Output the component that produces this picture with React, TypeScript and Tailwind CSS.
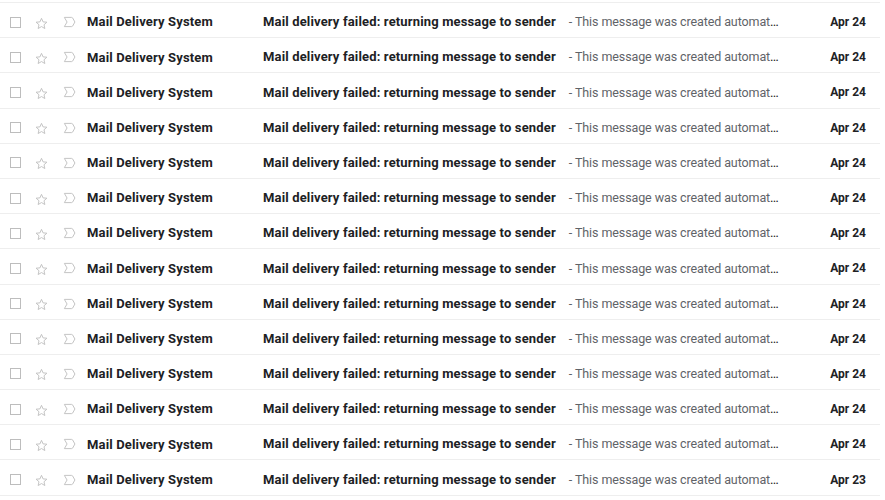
import React from "react";

interface IMailRow {
  sender: string;
  subject: string;
  snippet: string;
  date: string;
}

const rows: IMailRow[] = Array.from({ length: 14 }, (_, i) => ({
  sender: "Mail Delivery System",
  subject: "Mail delivery failed: returning message to sender",
  snippet: "This message was created automatically by mail delivery software.",
  date: i === 13 ? "Apr 23" : "Apr 24",
}));

const StarIcon = () => (
  <svg width="13" height="13" viewBox="0 0 24 24" fill="none" stroke="#c2c2c2" strokeWidth="1.8" strokeLinejoin="round">
    <polygon points="12,2.5 14.9,9 22,9.6 16.6,14.3 18.2,21.3 12,17.6 5.8,21.3 7.4,14.3 2,9.6 9.1,9" />
  </svg>
);

const ImportantIcon = () => (
  <svg width="13" height="12" viewBox="0 0 24 22" fill="none" stroke="#c2c2c2" strokeWidth="1.8" strokeLinejoin="round">
    <path d="M2.5 2.5h13.5c.7 0 1.3.3 1.7.9L22 11l-4.3 7.6c-.4.6-1 .9-1.7.9H2.5L7.5 11z" />
  </svg>
);

const MailRow: React.FunctionComponent<{ row: IMailRow }> = ({ row }) => (
  <div className="flex h-[35.2px] items-center border-b border-[#eeeeee] pt-[4px] text-[13px] text-[#202124]">
    <div className="flex w-[31px] pl-[10px]">
      <div className="h-[11px] w-[11px] border border-[#bdbdbd]" />
    </div>
    <div className="flex w-[21px] justify-center pt-[2px]">
      <StarIcon />
    </div>
    <div className="flex w-[35px] pl-[11px]">
      <ImportantIcon />
    </div>
    <div className="w-[176px] truncate font-bold tracking-[0.15px]">{row.sender}</div>
    <div className="min-w-0 flex-1 truncate">
      <span className="font-bold tracking-[0.15px]">{row.subject}</span>
      <span className="ml-[13px] text-[12.5px] tracking-[-0.1px] text-[#5f6368]">- {row.snippet}</span>
    </div>
    <div className="w-[100px] shrink-0 pr-[14px] text-right text-[12px] font-bold">{row.date}</div>
  </div>
);

export default function App() {
  return (
    <div className="h-[500px] w-[885px] overflow-hidden bg-white pt-[2px]" style={{ fontFamily: "Roboto, 'Liberation Sans', sans-serif" }}>
      <div className="w-[880px] border-t border-[#eeeeee]">
        {rows.map((row, i) => (
          <MailRow key={i} row={row} />
        ))}
      </div>
    </div>
  );
}
